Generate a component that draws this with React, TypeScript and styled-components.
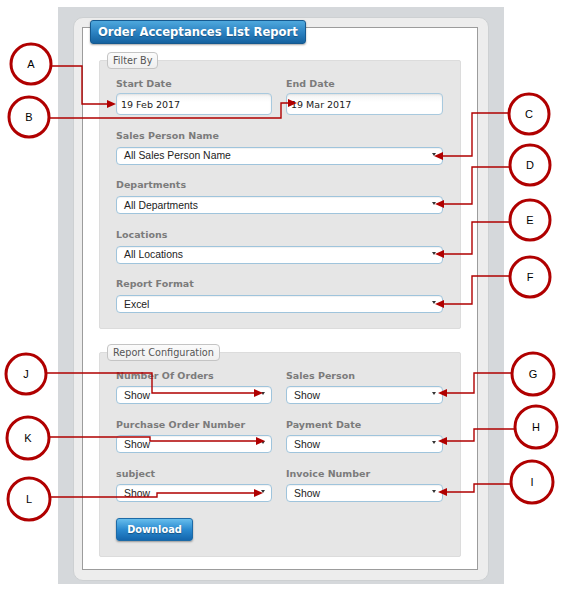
import React from "react";
import styled, { createGlobalStyle } from "styled-components";

const Global = createGlobalStyle`
  html, body { margin: 0; padding: 0; background: #ffffff; }
  * { box-sizing: border-box; }
`;

const Page = styled.div`
  position: relative;
  width: 567px;
  height: 593px;
  padding-top: 7px;
  font-family: "DejaVu Sans", Verdana, sans-serif;
`;

const Frame = styled.div`
  margin-left: 58px;
  width: 446px;
  height: 577px;
  background: #d5d8db;
  padding: 10px 15px 3px 15px;
`;

const Ring = styled.div`
  width: 416px;
  height: 564px;
  background: #ededed;
  border: 1px solid #cdd0d2;
  border-radius: 10px;
  padding: 9px 10px 10px 8px;
`;

const Inner = styled.div`
  height: 543px;
  background: #ffffff;
  border: 1px solid #9c9c9c;
  padding: 0 16px 0 16px;
  display: flex;
  flex-direction: column;
`;

const Title = styled.div`
  align-self: flex-start;
  margin: -8px 0 0 -9px;
  height: 24px;
  padding: 0 7px 0 7px;
  display: flex;
  align-items: center;
  border-radius: 3px;
  background: linear-gradient(#4ea8dd, #2a80c0 55%, #15629f);
  border: 1px solid #15598f;
  box-shadow: 0 1px 2px rgba(0, 0, 0, 0.35);
  color: #ffffff;
  font-weight: bold;
  font-size: 11.6px;
  text-shadow: 0 1px 1px rgba(0, 0, 0, 0.3);
  white-space: nowrap;
`;

const Section = styled.div<{ $top: number }>`
  margin-top: ${(p) => p.$top}px;
  background: #e6e6e6;
  border: 1px solid #dcdcdc;
  border-radius: 2px;
  padding: 0 17px 15px 16px;
  display: flex;
  flex-direction: column;
`;

const Legend = styled.div`
  align-self: flex-start;
  margin: -9px 0 9px -9px;
  height: 17px;
  padding: 0 5px;
  display: flex;
  align-items: center;
  background: linear-gradient(#fbfbfb, #efefef);
  border: 1px solid #c4c4c4;
  border-radius: 4px;
  color: #555555;
  font-size: 9.7px;
  white-space: nowrap;
`;

const Stack = styled.div<{ $gap: number }>`
  display: flex;
  flex-direction: column;
  gap: ${(p) => p.$gap}px;
`;

const Row = styled.div`
  display: grid;
  grid-template-columns: 156px 157px;
  column-gap: 14px;
`;

const Field = styled.div`
  display: flex;
  flex-direction: column;
`;

const Label = styled.div<{ $gap: number }>`
  height: 12px;
  line-height: 12px;
  margin-bottom: ${(p) => p.$gap}px;
  color: #7b7b7b;
  font-weight: bold;
  font-size: 9.5px;
  white-space: nowrap;
`;

const DateInput = styled.div`
  height: 22px;
  display: flex;
  align-items: center;
  padding-left: 4px;
  background: linear-gradient(#f3f3f3, #ffffff 40%, #ffffff);
  border: 1px solid #a8c9de;
  border-radius: 4px;
  box-shadow: inset 0 1px 2px rgba(0, 0, 0, 0.08);
  color: #222222;
  font-size: 9.5px;
`;

const Select = styled.div`
  height: 18px;
  display: flex;
  align-items: center;
  justify-content: space-between;
  padding: 0 6px 0 7px;
  background: #ffffff;
  border: 1px solid #9fc4dc;
  border-radius: 4px;
  box-shadow: inset 0 1px 1px rgba(0, 0, 0, 0.06);
  color: #222222;
  font-family: "Liberation Sans", Arial, sans-serif;
  font-size: 10.4px;
  white-space: nowrap;
`;

const Caret = styled.span`
  width: 0;
  height: 0;
  margin-top: -3px;
  border-left: 2.5px solid transparent;
  border-right: 2.5px solid transparent;
  border-top: 3.5px solid #333333;
`;

const Button = styled.div`
  align-self: flex-start;
  margin-top: 16px;
  width: 77px;
  height: 23px;
  display: flex;
  align-items: center;
  justify-content: center;
  border-radius: 3px;
  background: linear-gradient(#66bdec, #2a8ad0 50%, #1466ad);
  border: 1px solid #1d6aa6;
  box-shadow: 0 1px 2px rgba(0, 0, 0, 0.35);
  color: #ffffff;
  font-weight: bold;
  font-size: 9.8px;
  text-shadow: 0 1px 1px rgba(0, 0, 0, 0.35);
`;

const Overlay = styled.svg`
  position: absolute;
  left: 0;
  top: 0;
  pointer-events: none;
`;

const RED = "#b00000";

type Callout = {
  id: string;
  cx: number;
  cy: number;
  r: number;
  path: string;
  tip: [number, number];
  dir: "left" | "right";
};

const callouts: Callout[] = [
  { id: "A", cx: 31, cy: 64, r: 20, path: "M51,66 H82 V104 H109", tip: [116, 104], dir: "right" },
  { id: "B", cx: 29, cy: 117, r: 20, path: "M49,118 H281 V103 H290", tip: [297, 103], dir: "right" },
  { id: "C", cx: 529, cy: 114, r: 20, path: "M509,113 H472 V156 H441", tip: [434, 156], dir: "left" },
  { id: "D", cx: 530, cy: 165, r: 20, path: "M510,167 H472 V204 H442", tip: [435, 204], dir: "left" },
  { id: "E", cx: 530, cy: 220, r: 20, path: "M510,222 H472 V254 H442", tip: [435, 254], dir: "left" },
  { id: "F", cx: 530, cy: 277, r: 20, path: "M510,276 H472 V304 H442", tip: [435, 304], dir: "left" },
  { id: "G", cx: 533, cy: 374, r: 21, path: "M512,373 H474 V393 H445", tip: [438, 393], dir: "left" },
  { id: "H", cx: 536, cy: 427, r: 21, path: "M515,429 H474 V441 H445", tip: [438, 441], dir: "left" },
  { id: "I", cx: 532, cy: 482, r: 21, path: "M511,484 H474 V492 H445", tip: [438, 492], dir: "left" },
  { id: "J", cx: 26, cy: 374, r: 20, path: "M46,373 H152 V393 H256", tip: [263, 393], dir: "right" },
  { id: "K", cx: 28, cy: 438, r: 21, path: "M49,437 H150 V441 H258", tip: [265, 441], dir: "right" },
  { id: "L", cx: 29, cy: 499, r: 21, path: "M50,497 H157 V493 H256", tip: [263, 493], dir: "right" },
];

function arrowHead(tip: [number, number], dir: "left" | "right") {
  const [x, y] = tip;
  const d = dir === "right" ? -9 : 9;
  return `${x},${y} ${x + d},${y - 4} ${x + d},${y + 4}`;
}

const Annotations = () => (
  <Overlay width={567} height={593} viewBox="0 0 567 593">
    {callouts.map((c) => (
      <g key={c.id}>
        <path d={c.path} fill="none" stroke={RED} strokeWidth={1.4} />
        <polygon points={arrowHead(c.tip, c.dir)} fill={RED} />
        <circle cx={c.cx} cy={c.cy} r={c.r} fill="#ffffff" stroke={RED} strokeWidth={3} />
        <text
          x={c.cx}
          y={c.cy + 4}
          textAnchor="middle"
          fontFamily="'Liberation Sans', Arial, sans-serif"
          fontSize={11}
          fill="#000000"
        >
          {c.id}
        </text>
      </g>
    ))}
  </Overlay>
);

const Dropdown = ({ value }: { value: string }) => (
  <Select>
    <span>{value}</span>
    <Caret />
  </Select>
);

const SelectField = ({ label, value, gap = 5 }: { label: string; value: string; gap?: number }) => (
  <Field>
    <Label $gap={gap}>{label}</Label>
    <Dropdown value={value} />
  </Field>
);

export default function App() {
  return (
    <Page>
      <Global />
      <Frame>
        <Ring>
          <Inner>
            <Title>Order Acceptances List Report</Title>
            <Section $top={16}>
              <Legend>Filter By</Legend>
              <Stack $gap={14.5}>
                <Row>
                  <Field>
                    <Label $gap={3}>Start Date</Label>
                    <DateInput>19 Feb 2017</DateInput>
                  </Field>
                  <Field>
                    <Label $gap={3}>End Date</Label>
                    <DateInput>19 Mar 2017</DateInput>
                  </Field>
                </Row>
                <SelectField label="Sales Person Name" value="All Sales Person Name" />
                <SelectField label="Departments" value="All Departments" />
                <SelectField label="Locations" value="All Locations" />
                <SelectField label="Report Format" value="Excel" />
              </Stack>
            </Section>
            <Section $top={23}>
              <Legend>Report Configuration</Legend>
              <Stack $gap={15}>
                <Row>
                  <SelectField label="Number Of Orders" value="Show" gap={4} />
                  <SelectField label="Sales Person" value="Show" gap={4} />
                </Row>
                <Row>
                  <SelectField label="Purchase Order Number" value="Show" gap={4} />
                  <SelectField label="Payment Date" value="Show" gap={4} />
                </Row>
                <Row>
                  <SelectField label="subject" value="Show" gap={4} />
                  <SelectField label="Invoice Number" value="Show" gap={4} />
                </Row>
              </Stack>
              <Button>Download</Button>
            </Section>
          </Inner>
        </Ring>
      </Frame>
      <Annotations />
    </Page>
  );
}
